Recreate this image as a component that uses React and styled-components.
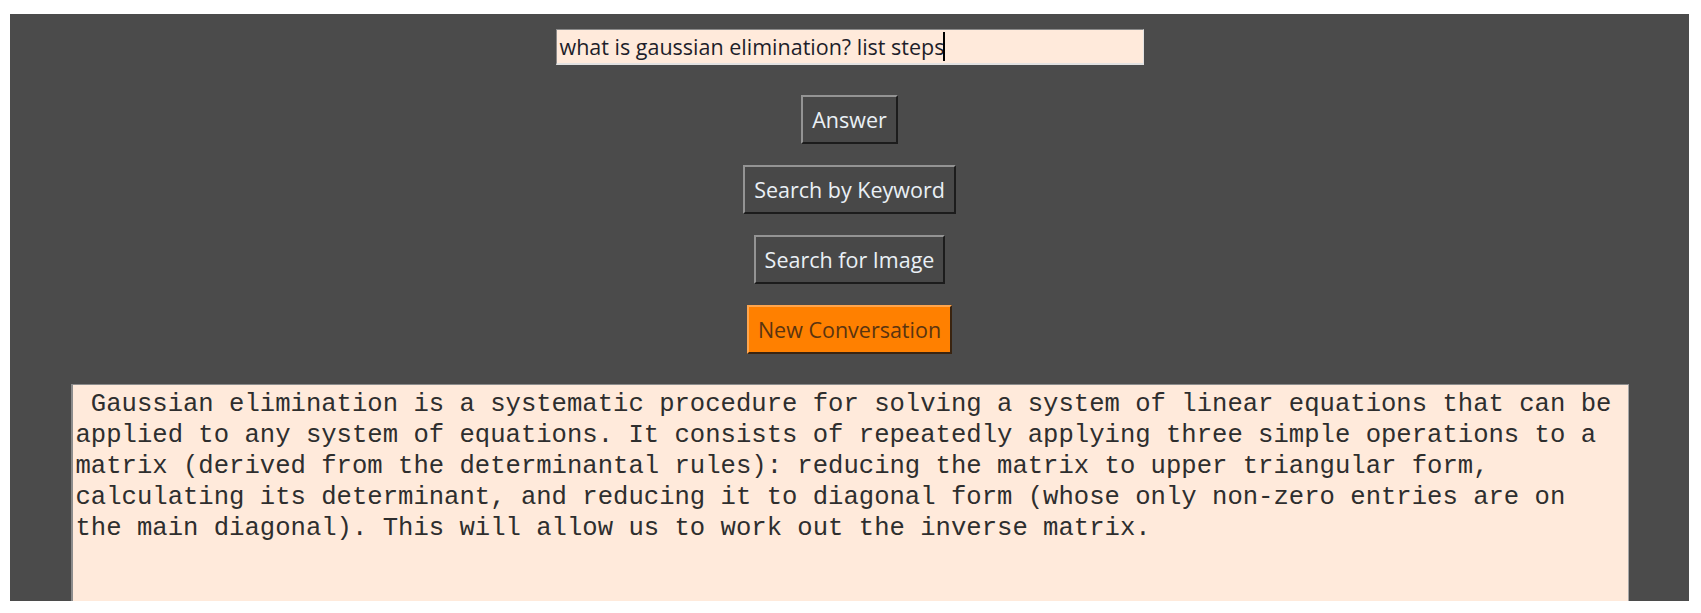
import styled, { createGlobalStyle } from 'styled-components';

const GlobalStyle = createGlobalStyle`
  html, body {
    margin: 0;
    padding: 0;
    background: #ffffff;
  }
  body {
    padding: 14px 12px 13px 10px;
  }
`;

const Window = styled.div`
  height: 587px;
  background-color: #4b4b4b;
  display: flex;
  flex-direction: column;
  align-items: center;
  padding-top: 15px;
  box-sizing: border-box;
  overflow: hidden;
`;

const QueryInput = styled.div`
  width: 588px;
  height: 36px;
  box-sizing: border-box;
  background-color: #ffeadb;
  border-top: 1px solid #8a8a8a;
  border-left: 1px solid #8a8a8a;
  border-bottom: 2px solid #e2e2e2;
  border-right: 1px solid #e2e2e2;
  font-family: "Open Sans", sans-serif;
  font-size: 21.5px;
  color: #1e1e2a;
  padding-left: 3px;
  display: flex;
  align-items: center;
  white-space: pre;
`;

const Caret = styled.span`
  display: inline-block;
  width: 2px;
  height: 29px;
  background: #000;
  margin-left: -1px;
`;

const ButtonStack = styled.div`
  display: flex;
  flex-direction: column;
  align-items: center;
  gap: 21px;
  margin-top: 30px;
`;

const Button = styled.button`
  height: 49px;
  box-sizing: border-box;
  padding: 0 9px;
  font-family: "Open Sans", sans-serif;
  font-size: 21.5px;
  background-color: ${p => (p.$accent ? '#ff8000' : '#484848')};
  color: ${p => (p.$accent ? '#5a3410' : '#eaf0f6')};
  border-style: solid;
  border-width: 2px;
  border-color: ${p =>
    p.$accent
      ? '#ffa54d #3a2410 #3a2410 #ffa54d'
      : '#949494 #1c1c1c #1c1c1c #949494'};
  cursor: pointer;
`;

const Output = styled.div`
  margin-top: 30px;
  width: 1558px;
  flex: 1;
  box-sizing: border-box;
  background-color: #ffeadb;
  border-top: 1px solid #8c8c8c;
  border-left: 2px solid #8c8c8c;
  border-right: 1px solid #a8a8a8;
  padding: 4px 3px 2px;
  font-family: "Courier New", "Nimbus Mono PS", FreeMono, "Liberation Mono", monospace;
  font-size: 25.6px;
  line-height: 31px;
  color: #2e2e2e;
  white-space: pre;
`;

const answer = ` Gaussian elimination is a systematic procedure for solving a system of linear equations that can be
applied to any system of equations. It consists of repeatedly applying three simple operations to a
matrix (derived from the determinantal rules): reducing the matrix to upper triangular form,
calculating its determinant, and reducing it to diagonal form (whose only non-zero entries are on
the main diagonal). This will allow us to work out the inverse matrix.`;

export default function App() {
  return (
    <>
      <GlobalStyle />
      <Window>
        <QueryInput>
          what is gaussian elimination? list steps<Caret />
        </QueryInput>
        <ButtonStack>
          <Button>Answer</Button>
          <Button>Search by Keyword</Button>
          <Button>Search for Image</Button>
          <Button $accent>New Conversation</Button>
        </ButtonStack>
        <Output>{answer}</Output>
      </Window>
    </>
  );
}
